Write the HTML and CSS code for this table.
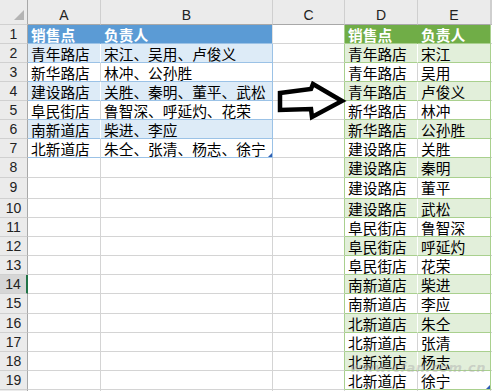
FILE: index.html
```html
<!DOCTYPE html>
<html lang="zh-CN">
<head>
<meta charset="utf-8">
<title>销售点 负责人</title>
<link rel="stylesheet" href="styles.css">
</head>
<body>
<div class="sheet">
  <div class="row hdr">
    <div class="c rh corner"><span class="tri"></span></div>
    <div class="c ch">A</div><div class="c ch">B</div><div class="c ch">C</div><div class="c ch">D</div><div class="c ch">E</div><div class="c ch"></div>
  </div>

  <div class="row">
    <div class="c rh">1</div>
    <div class="c bh bh-a">销售点</div><div class="c bh bh-b">负责人</div>
    <div class="c gl"></div>
    <div class="c gh gh-d">销售点</div><div class="c gh gh-e">负责人</div><div class="c"></div>
  </div>
  <div class="row">
    <div class="c rh">2</div>
    <div class="c bb bb-a">青年路店</div><div class="c bb bb-b">宋江、吴用、卢俊义</div>
    <div class="c gl"></div>
    <div class="c gb gb-d">青年路店</div><div class="c gb gb-e">宋江</div><div class="c"></div>
  </div>
  <div class="row">
    <div class="c rh">3</div>
    <div class="c bw bw-a">新华路店</div><div class="c bw bw-b">林冲、公孙胜</div>
    <div class="c gl"></div>
    <div class="c gw gw-d">青年路店</div><div class="c gw gw-e">吴用</div><div class="c"></div>
  </div>
  <div class="row">
    <div class="c rh">4</div>
    <div class="c bb bb-a">建设路店</div><div class="c bb bb-b">关胜、秦明、董平、武松</div>
    <div class="c gl"></div>
    <div class="c gb gb-d">青年路店</div><div class="c gb gb-e">卢俊义</div><div class="c"></div>
  </div>
  <div class="row">
    <div class="c rh">5</div>
    <div class="c bw bw-a">阜民街店</div><div class="c bw bw-b">鲁智深、呼延灼、花荣</div>
    <div class="c gl"></div>
    <div class="c gw gw-d">新华路店</div><div class="c gw gw-e">林冲</div><div class="c"></div>
  </div>
  <div class="row">
    <div class="c rh">6</div>
    <div class="c bb bb-a">南新道店</div><div class="c bb bb-b">柴进、李应</div>
    <div class="c gl"></div>
    <div class="c gb gb-d">新华路店</div><div class="c gb gb-e">公孙胜</div><div class="c"></div>
  </div>
  <div class="row">
    <div class="c rh">7</div>
    <div class="c bw bw-a">北新道店</div><div class="c bw bw-b last">朱仝、张清、杨志、徐宁<span class="handle"></span></div>
    <div class="c gl"></div>
    <div class="c gw gw-d">建设路店</div><div class="c gw gw-e">关胜</div><div class="c"></div>
  </div>
  <div class="row h20">
    <div class="c rh">8</div>
    <div class="c"></div><div class="c"></div>
    <div class="c gl"></div>
    <div class="c gb gb-d">建设路店</div><div class="c gb gb-e">秦明</div><div class="c"></div>
  </div>
  <div class="row h21">
    <div class="c rh">9</div>
    <div class="c"></div><div class="c"></div>
    <div class="c gl"></div>
    <div class="c gw gw-d">建设路店</div><div class="c gw gw-e">董平</div><div class="c"></div>
  </div>
  <div class="row">
    <div class="c rh">10</div>
    <div class="c"></div><div class="c"></div>
    <div class="c gl"></div>
    <div class="c gb gb-d">建设路店</div><div class="c gb gb-e">武松</div><div class="c"></div>
  </div>
  <div class="row">
    <div class="c rh">11</div>
    <div class="c"></div><div class="c"></div>
    <div class="c gl"></div>
    <div class="c gw gw-d">阜民街店</div><div class="c gw gw-e">鲁智深</div><div class="c"></div>
  </div>
  <div class="row">
    <div class="c rh">12</div>
    <div class="c"></div><div class="c"></div>
    <div class="c gl"></div>
    <div class="c gb gb-d">阜民街店</div><div class="c gb gb-e">呼延灼</div><div class="c"></div>
  </div>
  <div class="row">
    <div class="c rh">13</div>
    <div class="c"></div><div class="c"></div>
    <div class="c gl"></div>
    <div class="c gw gw-d">阜民街店</div><div class="c gw gw-e">花荣</div><div class="c"></div>
  </div>
  <div class="row">
    <div class="c rh rh-sel">14</div>
    <div class="c"></div><div class="c"></div>
    <div class="c gl"></div>
    <div class="c gb gb-d">南新道店</div><div class="c gb gb-e">柴进</div><div class="c"></div>
  </div>
  <div class="row h20">
    <div class="c rh">15</div>
    <div class="c"></div><div class="c"></div>
    <div class="c gl"></div>
    <div class="c gw gw-d">南新道店</div><div class="c gw gw-e">李应</div><div class="c"></div>
  </div>
  <div class="row">
    <div class="c rh">16</div>
    <div class="c"></div><div class="c"></div>
    <div class="c gl"></div>
    <div class="c gb gb-d">北新道店</div><div class="c gb gb-e">朱仝</div><div class="c"></div>
  </div>
  <div class="row">
    <div class="c rh">17</div>
    <div class="c"></div><div class="c"></div>
    <div class="c gl"></div>
    <div class="c gw gw-d">北新道店</div><div class="c gw gw-e">张清</div><div class="c"></div>
  </div>
  <div class="row">
    <div class="c rh">18</div>
    <div class="c"></div><div class="c"></div>
    <div class="c gl"></div>
    <div class="c gb gb-d">北新道店</div><div class="c gb gb-e">杨志</div><div class="c"></div>
  </div>
  <div class="row">
    <div class="c rh">19</div>
    <div class="c"></div><div class="c"></div>
    <div class="c gl"></div>
    <div class="c gw gw-d">北新道店</div><div class="c gw gw-e last">徐宁<span class="handle"></span></div><div class="c"></div>
  </div>
  <div class="row">
    <div class="c rh"></div>
    <div class="c"></div><div class="c"></div><div class="c"></div><div class="c"></div><div class="c"></div><div class="c"></div>
  </div>

  <svg class="arrow" width="492" height="391" viewBox="0 0 492 391" aria-hidden="true">
    <polygon points="280,93 311,89 313,84 342,101 312,117 311,109 280,110" fill="none" stroke="#000" stroke-width="4.5" stroke-linejoin="miter"/>
  </svg>
  <div class="wm">www.cfan.com.cn</div>
</div>
</body>
</html>
```
FILE: styles.css
```css
html, body {
  margin: 0;
  padding: 0;
  background: #fff;
}
body {
  width: 492px;
  height: 391px;
  overflow: hidden;
}
.sheet {
  position: relative;
  width: 492px;
  height: 391px;
  overflow: hidden;
  font-family: "Noto Sans CJK SC", "Microsoft YaHei", sans-serif;
}
.row {
  display: grid;
  grid-template-columns: 28px 73px 172px 72px 73px 73px 1fr;
  height: 19px;
}
.row.hdr { height: 25px; }
.row.h20 { height: 20px; }
.row.h21 { height: 21px; }

.c {
  box-sizing: border-box;
  border-right: 1px solid #d4d4d4;
  border-bottom: 1px solid #d4d4d4;
  padding-left: 3px;
  font-size: 14.7px;
  line-height: 19px;
  color: #000;
  white-space: nowrap;
  overflow: hidden;
  position: relative;
}

/* headers */
.rh {
  background: #ebebeb;
  border-right-color: #a8a8a8;
  border-bottom-color: #d0d0d0;
  padding-left: 0;
  text-align: center;
  font-family: "Liberation Sans", Arial, sans-serif;
  font-size: 14px;
  color: #222;
}
.rh-sel {
  background: #d6d6d6;
  border-right: 2px solid #217346;
  color: #222;
}
.ch {
  background: #ebebeb;
  border-right-color: #cfcfcf;
  border-bottom-color: #a8a8a8;
  padding: 6px 0 0 0;
  text-align: center;
  font-family: "Liberation Sans", Arial, sans-serif;
  font-size: 14px;
  color: #222;
}
.corner { padding: 0; }
.tri {
  position: absolute;
  right: 3px;
  bottom: 4px;
  width: 0;
  height: 0;
  border-left: 10px solid transparent;
  border-bottom: 10px solid #b4b4b4;
}

/* blue table */
.bh {
  background: #5b9bd5;
  color: #fff;
  font-weight: 700;
  border-bottom-color: #9bc2e6;
}
.bh-a { border-right-color: #5b9bd5; }
.bh-b { border-right-color: #e0e0e0; }
.bb {
  background: #ddebf7;
  border-bottom-color: #9bc2e6;
}
.bw {
  background: #fff;
  border-bottom-color: #9bc2e6;
}
.bb-a { border-right-color: #fff; }
.bw-a { border-right-color: #d4d4d4; }
.bb-b, .bw-b { border-right-color: #9bc2e6; }

/* green table */
.gl { border-right-color: #a9d08e; }
.gh {
  background: #70ad47;
  color: #fff;
  font-weight: 700;
  border-bottom-color: #a9d08e;
}
.gh-d { border-right-color: #70ad47; }
.gb {
  background: #e2efda;
  border-bottom-color: #a9d08e;
}
.gw {
  background: #fff;
  border-bottom-color: #a9d08e;
}
.gb-d { border-right-color: #fff; }
.gw-d { border-right-color: #d4d4d4; }
.gh-e, .gb-e, .gw-e { border-right-color: #a9d08e; }

.handle {
  position: absolute;
  right: 0;
  bottom: 0;
  width: 0;
  height: 0;
  border-left: 4px solid transparent;
  border-bottom: 4px solid #2f5fb3;
}

.arrow {
  position: absolute;
  left: 0;
  top: 0;
  pointer-events: none;
}
.wm {
  position: absolute;
  left: 350px;
  top: 360px;
  font-family: "DejaVu Sans", sans-serif;
  font-size: 13px;
  font-style: italic;
  font-weight: 700;
  color: rgba(170, 170, 170, 0.45);
  letter-spacing: 0.5px;
  pointer-events: none;
}
```
